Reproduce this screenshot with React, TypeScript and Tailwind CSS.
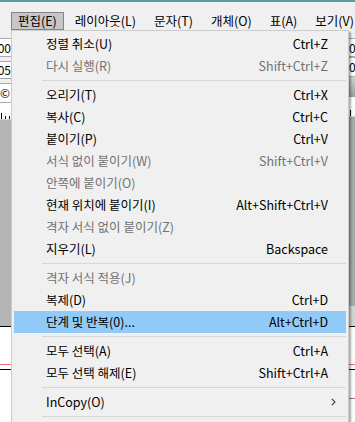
type Item =
  | { kind: 'sep' }
  | { kind: 'item'; label: string; shortcut?: string; disabled?: boolean; active?: boolean; submenu?: boolean }

const items: Item[] = [
  { kind: 'item', label: '정렬 취소(U)', shortcut: 'Ctrl+Z' },
  { kind: 'item', label: '다시 실행(R)', shortcut: 'Shift+Ctrl+Z', disabled: true },
  { kind: 'sep' },
  { kind: 'item', label: '오리기(T)', shortcut: 'Ctrl+X' },
  { kind: 'item', label: '복사(C)', shortcut: 'Ctrl+C' },
  { kind: 'item', label: '붙이기(P)', shortcut: 'Ctrl+V' },
  { kind: 'item', label: '서식 없이 붙이기(W)', shortcut: 'Shift+Ctrl+V', disabled: true },
  { kind: 'item', label: '안쪽에 붙이기(O)', disabled: true },
  { kind: 'item', label: '현재 위치에 붙이기(I)', shortcut: 'Alt+Shift+Ctrl+V' },
  { kind: 'item', label: '격자 서식 없이 붙이기(Z)', disabled: true },
  { kind: 'item', label: '지우기(L)', shortcut: 'Backspace' },
  { kind: 'sep' },
  { kind: 'item', label: '격자 서식 적용(J)', disabled: true },
  { kind: 'item', label: '복제(D)', shortcut: 'Ctrl+D' },
  { kind: 'item', label: '단계 및 반복(0)...', shortcut: 'Alt+Ctrl+D', active: true },
  { kind: 'sep' },
  { kind: 'item', label: '모두 선택(A)', shortcut: 'Ctrl+A' },
  { kind: 'item', label: '모두 선택 해제(E)', shortcut: 'Shift+Ctrl+A' },
  { kind: 'sep' },
  { kind: 'item', label: 'InCopy(O)', submenu: true },
  { kind: 'sep' },
]

const menus = ['편집(E)', '레이아웃(L)', '문자(T)', '개체(O)', '표(A)', '보기(V)']

function FieldBox({ text, className = '' }: { text: string; className?: string }) {
  return (
    <div className={`flex justify-end items-center overflow-hidden whitespace-nowrap bg-white border-y border-[#a9a9a9] text-[12px] leading-none text-black ${className}`}>
      {text}
    </div>
  )
}

export default function App() {
  return (
    <div className="relative w-[355px] h-[422px] overflow-hidden bg-[#f0f0f0] font-['Noto_Sans_CJK_KR','Noto_Sans',sans-serif] text-black select-none">
      {/* Menu bar */}
      <div className="h-[30px] border-t-2 border-[#5f9c9c] bg-[#f0f0f0] flex items-end pl-[11px] gap-[4px] overflow-hidden">
        {menus.map((m, i) => (
          <div
            key={m}
            className={`h-[18px] px-[6px] shrink-0 whitespace-nowrap flex items-center text-[12.5px] leading-none ${
              i === 0 ? 'bg-[#c7c7c7] border border-[#858585]' : 'border border-transparent'
            }`}
          >
            {m}
          </div>
        ))}
      </div>

      {/* Workspace behind the menu */}
      <div className="flex h-[392px]">
        {/* left strip */}
        <div className="w-[11px] flex flex-col">
          <div className="h-[8px]" />
          <FieldBox text="00" className="h-[19px]" />
          <div className="h-[4px]" />
          <FieldBox text="05" className="h-[18px]" />
          <div className="h-[4px]" />
          <FieldBox text="©" className="h-[20px] pr-[1px]" />
          <div className="h-[17px] bg-white flex items-end gap-[3px] pl-[1px] border-b border-[#d0d0d0]">
            <div className="w-px h-[6px] bg-black" />
            <div className="w-px h-[3px] bg-black" />
            <div className="w-px h-[3px] bg-black" />
          </div>
          <div className="h-[206px] bg-[#b4b4b4]" />
          <div className="h-px bg-black" />
          <div className="flex-1 bg-white flex flex-col">
            <div className="h-[37px]" />
            <div className="h-px bg-[#f06a78]" />
            <div className="h-[4px]" />
            <div className="h-px bg-black" />
          </div>
        </div>

        <div className="flex-1" />

        {/* right strip */}
        <div className="w-[6px] flex flex-col">
          <div className="h-[8px]" />
          <FieldBox text="0" className="h-[19px] justify-start" />
          <FieldBox text="0" className="h-[20px] justify-start" />
          <div className="h-[20px] bg-gradient-to-b from-[#cfcfcf] to-[#9e9e9e]" />
          <div className="h-[20px] bg-white flex items-end pl-[1px] border-b border-[#d0d0d0]">
            <div className="w-px h-[6px] bg-black" />
          </div>
          <div className="h-[189px] bg-[#a9a9a9]" />
          <div className="h-[20px] bg-[#d4d4d4]" />
          <div className="h-px bg-black" />
          <div className="flex-1 bg-white flex flex-col">
            <div className="h-[37px]" />
            <div className="h-px bg-[#f06a78]" />
            <div className="h-[4px]" />
            <div className="h-px bg-black" />
            <div className="h-[28px]" />
            <div className="h-px bg-[#b06aa0]" />
          </div>
        </div>
      </div>

      {/* Dropdown menu */}
      <div className="absolute left-[11px] top-[30px] w-[338px] bg-[#f0f0f0] border border-[#cccccc] shadow-[2px_2px_2px_rgba(0,0,0,0.35)] pt-[2px] pb-[4px] px-[2px]">
        {items.map((it, i) =>
          it.kind === 'sep' ? (
            <div key={i} className="h-[7px] pt-[3px] pl-[28px]">
              <div className="h-px bg-[#d7d7d7]" />
            </div>
          ) : (
            <div
              key={i}
              className={`h-[22px] flex items-center pl-[32px] pr-[18px] text-[12.5px] leading-none whitespace-nowrap ${
                it.active ? 'bg-[#91c9f7]' : ''
              } ${it.disabled ? 'text-[#727272]' : 'text-black'}`}
            >
              <span>{it.label}</span>
              <span className="ml-auto">{it.shortcut}</span>
              {it.submenu && (
                <svg width="5" height="8" viewBox="0 0 5 8" className="-mr-[8px]" fill="none" stroke="#404040" strokeWidth="1.1">
                  <path d="M0.8 0.8 L4 4 L0.8 7.2" />
                </svg>
              )}
            </div>
          ),
        )}
      </div>
    </div>
  )
}
